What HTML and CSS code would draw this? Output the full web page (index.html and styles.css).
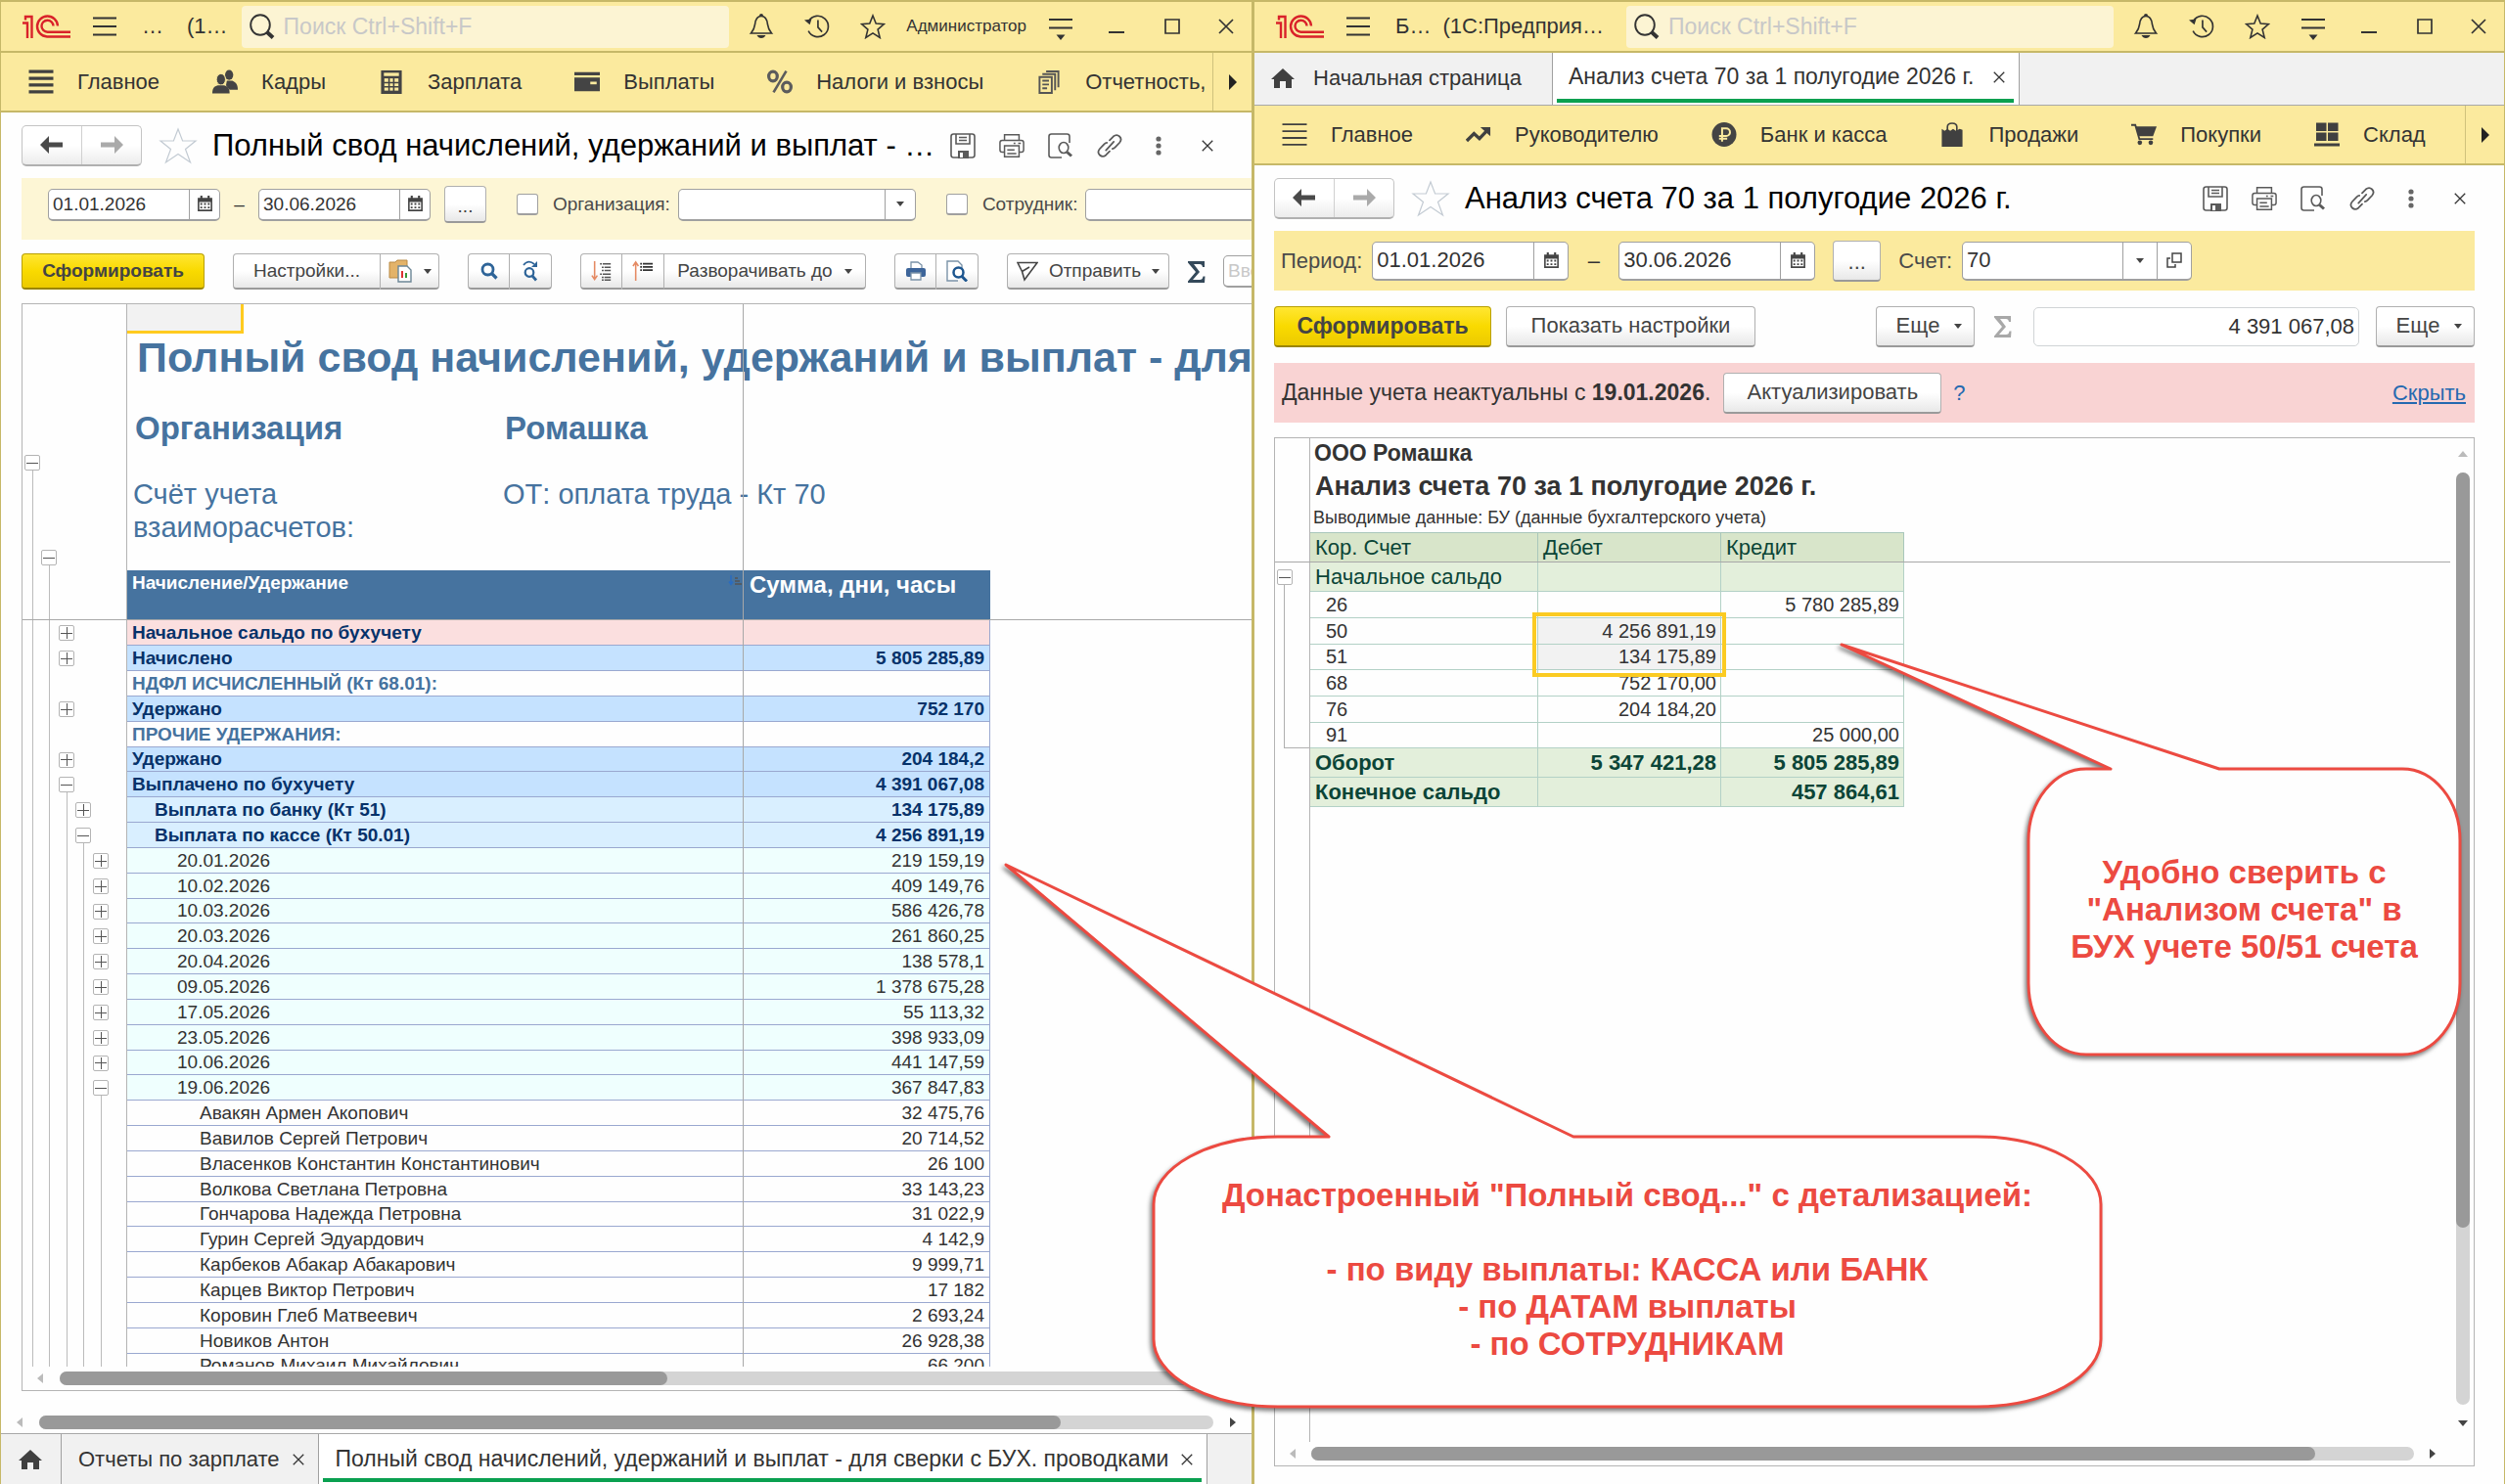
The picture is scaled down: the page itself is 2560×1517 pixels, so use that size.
FILE: index.html
```html
<!DOCTYPE html>
<html lang="ru">
<head>
<meta charset="utf-8">
<meta name="viewport" content="width=device-width, initial-scale=1">
<title>1С:Предприятие</title>
<link rel="stylesheet" href="styles.css">
</head>
<body>
<svg class="defs" aria-hidden="true">
  <symbol id="logo" viewBox="0 0 49 24"><g fill="none" stroke="#d9222a" stroke-width="2.4"><path d="M0 8.5h5V24M3 5.5V2h6.500V24"/><path d="M36 11.500A10.500 10.500 0 1 0 25 22.500H49"/><path d="M31.500 11.500A6 6 0 1 0 25.500 17.700H49"/></g></symbol>
  <symbol id="lines3" viewBox="0 0 24 24"><path d="M0 3.500h24M0 12h24M0 20.500h24" stroke="#333" stroke-width="1.800"/></symbol>
  <symbol id="lines4b" viewBox="0 0 24 24"><path d="M0 2h24M0 8.700h24M0 15.300h24M0 22h24" stroke="#404040" stroke-width="3.200"/></symbol>
  <symbol id="lines4" viewBox="0 0 24 24"><path d="M0 2h24M0 8.700h24M0 15.300h24M0 22h24" stroke="#404040" stroke-width="1.800"/></symbol>
  <symbol id="search" viewBox="0 0 26 26"><g fill="none" stroke="#333"><ellipse cx="11" cy="11.500" rx="9.800" ry="10.300" stroke-width="1.900"/><path d="M17.500 18.500l6.500 6" stroke-width="4"/></g></symbol>
  <symbol id="bell" viewBox="0 0 24 26"><path d="M12 2.500c-4.500 0-6 4-6.500 8.500S4 17 1.500 20h21c-2.500-3-3.500-4.500-4-9S16.500 2.500 12 2.500z" fill="none" stroke="#333" stroke-width="1.700"/><path d="M10 2a2 2 0 0 1 4 0zM7.500 22h9c-1 2-2.500 3-4.500 3s-3.500-1-4.500-3z" fill="#333"/></symbol>
  <symbol id="history" viewBox="0 0 28 26"><path d="M5 7A11.500 11.500 0 1 1 4.500 18M15 6v8l4.500 5" fill="none" stroke="#333" stroke-width="1.800"/><path d="M0 6l8-1-2 6z" fill="#333"/></symbol>
  <symbol id="star" viewBox="0 0 26 26"><path d="M13 2l3.200 8 8.300.6-6.400 5.500 2.100 8.400-7.200-4.600-7.200 4.600 2.100-8.400L1.500 10.600 9.800 10z" fill="none" stroke="#333" stroke-width="1.600"/></symbol>
  <symbol id="bigstar" viewBox="0 0 40 38"><path d="M20 2l4.600 12H38L27.500 22.500 32.500 36 20 27.500 7.500 36l5-13.500L2 14h13.400z" fill="none" stroke="#c3cbd3" stroke-width="1.200"/></symbol>
  <symbol id="menu" viewBox="0 0 24 24"><path d="M0 3h24M0 11.500h24" stroke="#333" stroke-width="1.900"/><path d="M7.500 18.500h9L12 24z" fill="#333"/></symbol>
  <symbol id="min" viewBox="0 0 16 16"><path d="M0 14h16" stroke="#333" stroke-width="2"/></symbol>
  <symbol id="max" viewBox="0 0 16 16"><path d="M1 1h14v14H1z" fill="none" stroke="#333" stroke-width="1.700"/></symbol>
  <symbol id="close" viewBox="0 0 16 16"><path d="M1 1l14 14M15 1L1 15" fill="none" stroke="#333" stroke-width="1.700"/></symbol>
  <symbol id="people" viewBox="0 0 28 26"><g fill="#444"><ellipse cx="18.500" cy="5.500" rx="4.500" ry="5.500"/><path d="M16 12h6c4 2 6 4 6 10h-9l-4-5z"/><ellipse cx="9.500" cy="10.500" rx="5" ry="6.200" stroke="#fbea9e"/><path d="M0 26c0-6 2-8 6-9h7c4 1 6 3 6 9z"/></g></symbol>
  <symbol id="calc" viewBox="0 0 22 26"><path d="M0 1h22v25H0z" fill="#444"/><path d="M3 3.500h16v3.500H3z" fill="#fbea9e"/><path d="M3.500 9.500h15v13h-15z" fill="#fbea9e"/><path d="M8.500 9v14M13.500 9v14M3 14h16M3 18.500h16" stroke="#444" stroke-width="1.600"/></symbol>
  <symbol id="wallet" viewBox="0 0 24 20"><path d="M0 1h24v3H0zM0 6h24v13H0z" fill="#444"/><path d="M15 10h6v2.500h-6z" fill="#fbea9e"/></symbol>
  <symbol id="percent" viewBox="0 0 24 22"><g fill="none" stroke="#5c5c5c" stroke-width="3"><ellipse cx="5.500" cy="6" rx="4" ry="4.500"/><ellipse cx="18.500" cy="16" rx="4" ry="4.500"/><path d="M18 1L6 21" stroke-width="2.400"/></g></symbol>
  <symbol id="docs" viewBox="0 0 22 26"><g fill="none" stroke="#555" stroke-width="2"><path d="M1 8h13v17H1z"/><path d="M4 5h13.500v17M8 2h13v17M4 12h7M4 16h7M4 20h5"/></g></symbol>
  <symbol id="right" viewBox="0 0 10 16"><path d="M1 0l8 8-8 8z" fill="#222"/></symbol>
  <symbol id="back" viewBox="0 0 24 18"><path d="M0 9L9 0v6.500h14v5H9V18z" fill="#4a4a4a"/></symbol>
  <symbol id="fwd" viewBox="0 0 24 18"><path d="M24 9L15 0v6.500H1v5h14V18z" fill="#aaa"/></symbol>
  <symbol id="save" viewBox="0 0 26 26"><g fill="none" stroke="#5a5a5a" stroke-width="1.600"><rect x="1" y="1" width="24" height="24" rx="2.500"/><path d="M6 1v10h14V1M9 4.500h8M9 7.500h8"/></g><path d="M8 18h11v8H8z" fill="#5a5a5a"/><path d="M10 20h3v5h-3z" fill="#fefefe"/></symbol>
  <symbol id="print" viewBox="0 0 28 26"><g fill="none" stroke="#5a5a5a" stroke-width="1.600"><path d="M6 7V1h16v6M6 20H3.500Q1 20 1 17.500V9.500Q1 7 3.500 7h21Q27 7 27 9.500v8q0 2.500-2.500 2.500H22"/><path d="M6 13h16v12H6zM9 17.500h8M9 21.500h10M16 10.200h2M21 10.200h3"/></g></symbol>
  <symbol id="preview" viewBox="0 0 26 26"><g fill="none" stroke="#5a5a5a" stroke-width="1.600"><path d="M22 10V3.500Q22 1 19.500 1h-16Q1 1 1 3.500v19Q1 25 3.500 25H14"/><ellipse cx="16" cy="15" rx="4.800" ry="5.500"/><path d="M19.500 19.500l4.500 4" stroke-width="3"/></g></symbol>
  <symbol id="link" viewBox="0 0 28 26"><g fill="none" stroke="#5a5a5a" stroke-width="1.900" stroke-linecap="round"><path d="M10 18L18.500 8.500M14 7l4-4.200c5-4 11 1.700 7 6.700l-5 5.300c-1 1-2 1.500-3 1.500M14 19l-4 4.200c-5 4-11-1.700-7-6.700l5-5.300c1-1 2-1.500 3-1.500"/></g></symbol>
  <symbol id="dots" viewBox="0 0 6 20"><g fill="#666"><circle cx="3" cy="3" r="2.600"/><circle cx="3" cy="10" r="2.600"/><circle cx="3" cy="17" r="2.600"/></g></symbol>
  <symbol id="cal" viewBox="0 0 14 16"><path d="M0 2h14v13H0z" fill="#444"/><path d="M1.500 6h11v7.500h-11z" fill="#fff"/><path d="M2.500 8h9M2.500 11.500h9" stroke="#444" stroke-width="1.700" stroke-dasharray="1.800 1.800"/><path d="M3.500 0v3M10.500 0v3" stroke="#444" stroke-width="2"/></symbol>
  <symbol id="caret" viewBox="0 0 8 5"><path d="M0 0h8L4 5z" fill="#444"/></symbol>
  <symbol id="open" viewBox="0 0 16 16"><path d="M6 1h9v9H6zM4 6H1v9h8v-3" fill="none" stroke="#444" stroke-width="1.500"/></symbol>
  <symbol id="folder" viewBox="0 0 24 24"><path d="M1 3h6l2-2h10v18H1z" fill="#e3b369" stroke="#b98a44"/><path d="M10 7h9l4 4v12H10z" fill="#fff" stroke="#6c8796" stroke-width="1.400"/><path d="M14 12v7" stroke="#d33" stroke-width="2"/><path d="M18 14v5" stroke="#3a9a3a" stroke-width="2"/></symbol>
  <symbol id="find" viewBox="0 0 18 18"><circle cx="7.500" cy="7.500" r="5.500" fill="none" stroke="#2e6498" stroke-width="2.800"/><path d="M11.500 11.500l5 5" stroke="#2e6498" stroke-width="3.200"/></symbol>
  <symbol id="findnext" viewBox="0 0 18 22"><g fill="none" stroke="#2e6498"><circle cx="8" cy="12.500" r="4.300" stroke-width="2.200"/><path d="M11 16l4 4.500" stroke-width="2.800"/><path d="M2 5q5-6 11-1" stroke-width="1.700"/></g><path d="M16 1v6h-6z" fill="#2e6498"/></symbol>
  <symbol id="expand" viewBox="0 0 24 22"><path d="M4 0v19M1 16l3 4.500L7 16" stroke="#e58a63" stroke-width="1.700" fill="none"/><path d="M10 3h12M12 7h10M12 10.500h10M10 14.500h12M12 18h10M12 21h10" stroke="#555" stroke-width="1.600" stroke-dasharray="2 1 20"/></symbol>
  <symbol id="collapse" viewBox="0 0 24 22"><path d="M4 22V2M1 5.500L4 1l3 4.500" stroke="#e58a63" stroke-width="1.700" fill="none"/><path d="M9 3h14M9 6.500h14M9 10h14" stroke="#333" stroke-width="1.800" stroke-dasharray="2 1 20"/></symbol>
  <symbol id="cprint" viewBox="0 0 22 20"><path d="M6 8V1h7l4 3v4" fill="#fff" stroke="#7b93a8" stroke-width="1.300"/><rect x="1" y="7" width="20" height="9" rx="2" fill="#3d659a"/><path d="M6 12h10v7H6z" fill="#fff" stroke="#7b93a8" stroke-width="1.300"/></symbol>
  <symbol id="cpreview" viewBox="0 0 22 22"><path d="M12 21H1V1h11l4 4v4" fill="#fff" stroke="#7b93a8" stroke-width="1.400"/><circle cx="12.500" cy="12.500" r="5" fill="#fff" stroke="#1d568f" stroke-width="2.500"/><path d="M16 16.500l5 5" stroke="#1d568f" stroke-width="3"/></symbol>
  <symbol id="send" viewBox="0 0 22 19"><path d="M1 1h20L8 18.500 5.500 10zM5.500 10L13 5.500" fill="none" stroke="#444" stroke-width="1.600"/></symbol>
  <symbol id="sum" viewBox="0 0 18 22"><path d="M0 0h17v6h-2q-.5-3-3-3H6l6 8-7 8h7q3 0 3.500-3.500h2L17 22H0v-1.500L8 11 0 1.500z" fill="currentColor"/></symbol>
  <symbol id="home" viewBox="0 0 24 20"><path d="M12 0l12 11h-3v9h-6v-7H9v7H3v-9H0z" fill="#404040"/></symbol>
  <symbol id="trend" viewBox="0 0 28 18"><path d="M1 16l8-8 6 5.500L24 4" fill="none" stroke="#404040" stroke-width="3.600"/><path d="M16 1h11v10z" fill="#404040"/></symbol>
  <symbol id="ruble" viewBox="0 0 24 24"><circle cx="12" cy="12" r="12" fill="#444"/><path d="M10 19V6h4a3.500 3.500 0 0 1 0 7.500H7M7 16h8" fill="none" stroke="#fbea9e" stroke-width="1.900"/></symbol>
  <symbol id="bag" viewBox="0 0 22 26"><path d="M0 7l3 2 3-2 3 2 3-2 3 2 4-2 3 1v18H0z" fill="#404040"/><path d="M6 11V5q0-4 5-4t5 4v6" fill="none" stroke="#404040" stroke-width="1.700"/></symbol>
  <symbol id="cart" viewBox="0 0 28 24"><path d="M0 1.500h4.500L9 17h15" fill="none" stroke="#404040" stroke-width="2"/><path d="M5 3h23l-4 11H8z" fill="#404040"/><circle cx="9.500" cy="21" r="2.500" fill="#404040"/><circle cx="21.500" cy="21" r="2.500" fill="#404040"/></symbol>
  <symbol id="boxes" viewBox="0 0 26 24"><path d="M2 0h10.500v8.500H2zM14 0h10.500v8.500H14zM2 10h10.500v8.500H2zM14 10h10.500v8.500H14zM0 21h26v3H0z" fill="#404040"/></symbol>
  <symbol id="sleft" viewBox="0 0 8 10"><path d="M7 0v10L1 5z" fill="#bbb"/></symbol>
  <symbol id="sright" viewBox="0 0 8 10"><path d="M1 0v10l6-5z" fill="#444"/></symbol>
  <symbol id="sup" viewBox="0 0 10 8"><path d="M0 7h10L5 1z" fill="#bbb"/></symbol>
  <symbol id="sdown" viewBox="0 0 10 8"><path d="M0 1h10L5 7z" fill="#444"/></symbol>
</svg>

<main class="desktop">
<section class="window payroll">
  <header class="titlebar">
    <svg class="logo"><use href="#logo"/></svg>
    <button class="ico" aria-label="Меню"><svg class="i24"><use href="#lines3"/></svg></button>
    <span class="app-name">…</span><span class="app-kind">(1…</span>
    <label class="search"><svg class="i26"><use href="#search"/></svg><input type="search" placeholder="Поиск Ctrl+Shift+F" aria-label="Поиск"></label>
    <div class="sysicons">
      <button class="ico" aria-label="Уведомления"><svg class="i26"><use href="#bell"/></svg></button>
      <button class="ico" aria-label="История"><svg class="i26"><use href="#history"/></svg></button>
      <button class="ico" aria-label="Избранное"><svg class="i26"><use href="#star"/></svg></button>
      <a class="user" href="#user">Администратор</a>
      <button class="ico" aria-label="Сервис"><svg class="i24"><use href="#menu"/></svg></button>
      <button class="ico" aria-label="Свернуть"><svg class="i16"><use href="#min"/></svg></button>
      <button class="ico" aria-label="Развернуть"><svg class="i16"><use href="#max"/></svg></button>
      <button class="ico" aria-label="Закрыть"><svg class="i16"><use href="#close"/></svg></button>
    </div>
  </header>
  <nav class="sections">
    <div class="section-list">
      <a href="#main"><svg><use href="#lines4b"/></svg>Главное</a>
      <a href="#staff"><svg><use href="#people"/></svg>Кадры</a>
      <a href="#salary"><svg><use href="#calc"/></svg>Зарплата</a>
      <a href="#payments"><svg><use href="#wallet"/></svg>Выплаты</a>
      <a href="#taxes"><svg><use href="#percent"/></svg>Налоги и взносы</a>
      <a href="#reports"><svg><use href="#docs"/></svg>Отчетность,</a>
    </div>
    <button class="more-sections" aria-label="Далее"><svg><use href="#right"/></svg></button>
  </nav>
  <div class="form-head">
    <div class="history"><button aria-label="Назад"><svg><use href="#back"/></svg></button><button aria-label="Вперед"><svg><use href="#fwd"/></svg></button></div>
    <button class="ico fav" aria-label="В избранное"><svg><use href="#bigstar"/></svg></button>
    <h1>Полный свод начислений, удержаний и выплат - …</h1>
    <div class="form-icons">
      <button class="ico" aria-label="Сохранить"><svg class="i26"><use href="#save"/></svg></button>
      <button class="ico" aria-label="Печать"><svg class="i26"><use href="#print"/></svg></button>
      <button class="ico" aria-label="Просмотр"><svg class="i26"><use href="#preview"/></svg></button>
      <button class="ico" aria-label="Ссылка"><svg class="i26"><use href="#link"/></svg></button>
      <button class="ico" aria-label="Еще"><svg class="i20"><use href="#dots"/></svg></button>
      <button class="ico" aria-label="Закрыть форму"><svg class="i12"><use href="#close"/></svg></button>
    </div>
  </div>
  <div class="filters">
    <div class="field date"><input type="text" value="01.01.2026" aria-label="Начало периода"><button aria-label="Календарь"><svg class="cal"><use href="#cal"/></svg></button></div>
    <span class="dash">–</span>
    <div class="field date"><input type="text" value="30.06.2026" aria-label="Конец периода"><button aria-label="Календарь"><svg class="cal"><use href="#cal"/></svg></button></div>
    <button class="btn period">...</button>
    <input type="checkbox" id="use-org"><label for="use-org">Организация:</label>
    <div class="field org"><input type="text" aria-label="Организация"><button aria-label="Выбрать"><svg class="caret"><use href="#caret"/></svg></button></div>
    <input type="checkbox" id="use-emp"><label for="use-emp">Сотрудник:</label>
    <div class="field emp"><input type="text" aria-label="Сотрудник"></div>
  </div>
  <div class="toolbar">
    <button class="btn primary">Сформировать</button>
    <div class="group"><button class="btn wide">Настройки...</button><button class="btn opts" aria-label="Варианты"><svg class="i24"><use href="#folder"/></svg><svg class="caret"><use href="#caret"/></svg></button></div>
    <div class="group"><button class="btn sq" aria-label="Найти"><svg class="i18"><use href="#find"/></svg></button><button class="btn sq" aria-label="Найти далее"><svg class="i22"><use href="#findnext"/></svg></button></div>
    <div class="group"><button class="btn sq" aria-label="Развернуть группы"><svg class="i22"><use href="#expand"/></svg></button><button class="btn sq" aria-label="Свернуть группы"><svg class="i22"><use href="#collapse"/></svg></button><button class="btn unfold">Разворачивать до<svg class="caret"><use href="#caret"/></svg></button></div>
    <div class="group"><button class="btn sq" aria-label="Печать"><svg class="i22"><use href="#cprint"/></svg></button><button class="btn sq" aria-label="Предпросмотр"><svg class="i22"><use href="#cpreview"/></svg></button></div>
    <button class="btn send"><svg class="i22"><use href="#send"/></svg>Отправить<svg class="caret"><use href="#caret"/></svg></button>
    <svg class="sum"><use href="#sum"/></svg>
    <div class="field cell-sum"><input type="text" placeholder="Введите слово" aria-label="Сумма"></div>
  </div>

  <div class="sheet">
    <div class="sheet-view">
      <div class="report-head">
        <div class="gutter">
          <div class="lane outer"><button class="box minus" aria-label="Свернуть"></button></div>
          <div class="lane inner"><button class="box minus" aria-label="Свернуть"></button></div>
        </div>
        <div class="report-info">
          <div class="current-cell"></div>
          <h2>Полный свод начислений, удержаний и выплат - для сверки с БУХ. проводками</h2>
          <dl class="params">
            <dt class="strong">Организация</dt><dd class="strong">Ромашка</dd>
            <dt>Счёт учета взаиморасчетов:</dt><dd>ОТ: оплата труда - Кт 70</dd>
          </dl>
        </div>
      </div>
      <table class="ledger">
        <colgroup><col class="c-tree"><col class="c-name"><col class="c-sum"></colgroup>
        <thead><tr><td class="tree l2"></td><th>Начисление/Удержание<svg class="sort" viewBox="0 0 14 10"><path d="M3 0v9M1 6.500l2 3 2-3" fill="none" stroke="#2a6cc0" stroke-width="1.500"/><path d="M7 3h3M7 6h5M7 9h7" stroke="#555" stroke-width="1.500"/></svg></th><th class="h-sum">Сумма, дни, часы</th></tr></thead>
        <tbody>
          <tr class="open-bal"><td class="tree l2"><button class="box plus" aria-label="Развернуть"></button></td><td>Начальное сальдо по бухучету</td><td></td></tr>
          <tr class="total"><td class="tree l2"><button class="box plus" aria-label="Развернуть"></button></td><td>Начислено</td><td>5 805 285,89</td></tr>
          <tr class="caption"><td class="tree l2"></td><td>НДФЛ ИСЧИСЛЕННЫЙ (Кт 68.01):</td><td></td></tr>
          <tr class="total"><td class="tree l2"><button class="box plus" aria-label="Развернуть"></button></td><td>Удержано</td><td>752 170</td></tr>
          <tr class="caption"><td class="tree l2"></td><td>ПРОЧИЕ УДЕРЖАНИЯ:</td><td></td></tr>
          <tr class="total"><td class="tree l2"><button class="box plus" aria-label="Развернуть"></button></td><td>Удержано</td><td>204 184,2</td></tr>
          <tr class="total"><td class="tree l2 start3"><button class="box minus" aria-label="Свернуть"></button></td><td>Выплачено по бухучету</td><td>4 391 067,08</td></tr>
          <tr class="kind"><td class="tree l3"><button class="box plus" aria-label="Развернуть"></button></td><td>Выплата по банку (Кт 51)</td><td>134 175,89</td></tr>
          <tr class="kind"><td class="tree l3 start4"><button class="box minus" aria-label="Свернуть"></button></td><td>Выплата по кассе (Кт 50.01)</td><td>4 256 891,19</td></tr>
          <tr class="day"><td class="tree l4"><button class="box plus" aria-label="Развернуть"></button></td><td>20.01.2026</td><td>219 159,19</td></tr>
          <tr class="day"><td class="tree l4"><button class="box plus" aria-label="Развернуть"></button></td><td>10.02.2026</td><td>409 149,76</td></tr>
          <tr class="day"><td class="tree l4"><button class="box plus" aria-label="Развернуть"></button></td><td>10.03.2026</td><td>586 426,78</td></tr>
          <tr class="day"><td class="tree l4"><button class="box plus" aria-label="Развернуть"></button></td><td>20.03.2026</td><td>261 860,25</td></tr>
          <tr class="day"><td class="tree l4"><button class="box plus" aria-label="Развернуть"></button></td><td>20.04.2026</td><td>138 578,1</td></tr>
          <tr class="day"><td class="tree l4"><button class="box plus" aria-label="Развернуть"></button></td><td>09.05.2026</td><td>1 378 675,28</td></tr>
          <tr class="day"><td class="tree l4"><button class="box plus" aria-label="Развернуть"></button></td><td>17.05.2026</td><td>55 113,32</td></tr>
          <tr class="day"><td class="tree l4"><button class="box plus" aria-label="Развернуть"></button></td><td>23.05.2026</td><td>398 933,09</td></tr>
          <tr class="day"><td class="tree l4"><button class="box plus" aria-label="Развернуть"></button></td><td>10.06.2026</td><td>441 147,59</td></tr>
          <tr class="day"><td class="tree l4 start5"><button class="box minus" aria-label="Свернуть"></button></td><td>19.06.2026</td><td>367 847,83</td></tr>
          <tr class="person"><td class="tree l5"></td><td>Авакян Армен Акопович</td><td>32 475,76</td></tr>
          <tr class="person"><td class="tree l5"></td><td>Вавилов Сергей Петрович</td><td>20 714,52</td></tr>
          <tr class="person"><td class="tree l5"></td><td>Власенков Константин Константинович</td><td>26 100</td></tr>
          <tr class="person"><td class="tree l5"></td><td>Волкова Светлана Петровна</td><td>33 143,23</td></tr>
          <tr class="person"><td class="tree l5"></td><td>Гончарова Надежда Петровна</td><td>31 022,9</td></tr>
          <tr class="person"><td class="tree l5"></td><td>Гурин Сергей Эдуардович</td><td>4 142,9</td></tr>
          <tr class="person"><td class="tree l5"></td><td>Карбеков Абакар Абакарович</td><td>9 999,71</td></tr>
          <tr class="person"><td class="tree l5"></td><td>Карцев Виктор Петрович</td><td>17 182</td></tr>
          <tr class="person"><td class="tree l5"></td><td>Коровин Глеб Матвеевич</td><td>2 693,24</td></tr>
          <tr class="person"><td class="tree l5"></td><td>Новиков Антон</td><td>26 928,38</td></tr>
          <tr class="person"><td class="tree l5"></td><td>Романов Михаил Михайлович</td><td>66 200</td></tr>
        </tbody>
      </table>
      <div class="freeze-col"></div>
      <div class="freeze-row"></div>
    </div>
    <div class="hscroll sheet-scroll"><svg class="arr"><use href="#sleft"/></svg><div class="track"><div class="thumb"></div></div></div>
  </div>
  <div class="hscroll form-scroll"><svg class="arr"><use href="#sleft"/></svg><div class="track"><div class="thumb"></div></div><svg class="arr"><use href="#sright"/></svg></div>
  <nav class="tabs bottom">
    <a class="tab home" href="#home" aria-label="Начальная страница"><svg class="i24"><use href="#home"/></svg></a>
    <a class="tab" href="#salary-reports">Отчеты по зарплате<svg class="i12"><use href="#close"/></svg></a>
    <a class="tab active" href="#summary">Полный свод начислений, удержаний и выплат - для сверки с БУХ. проводками<svg class="i12"><use href="#close"/></svg></a>
  </nav>
</section>

<section class="window books">
  <header class="titlebar">
    <svg class="logo"><use href="#logo"/></svg>
    <button class="ico" aria-label="Меню"><svg class="i24"><use href="#lines3"/></svg></button>
    <span class="app-name">Б…</span><span class="app-kind">(1С:Предприя…</span>
    <label class="search"><svg class="i26"><use href="#search"/></svg><input type="search" placeholder="Поиск Ctrl+Shift+F" aria-label="Поиск"></label>
    <div class="sysicons">
      <button class="ico" aria-label="Уведомления"><svg class="i26"><use href="#bell"/></svg></button>
      <button class="ico" aria-label="История"><svg class="i26"><use href="#history"/></svg></button>
      <button class="ico" aria-label="Избранное"><svg class="i26"><use href="#star"/></svg></button>
      <button class="ico" aria-label="Сервис"><svg class="i24"><use href="#menu"/></svg></button>
      <button class="ico" aria-label="Свернуть"><svg class="i16"><use href="#min"/></svg></button>
      <button class="ico" aria-label="Развернуть"><svg class="i16"><use href="#max"/></svg></button>
      <button class="ico" aria-label="Закрыть"><svg class="i16"><use href="#close"/></svg></button>
    </div>
  </header>
  <nav class="tabs top">
    <a class="tab start" href="#start"><svg class="i24"><use href="#home"/></svg>Начальная страница</a>
    <a class="tab active" href="#analysis">Анализ счета 70 за 1 полугодие 2026 г.<svg class="i12"><use href="#close"/></svg></a>
  </nav>
  <nav class="sections">
    <div class="section-list">
      <a href="#main2"><svg><use href="#lines4"/></svg>Главное</a>
      <a href="#manager"><svg><use href="#trend"/></svg>Руководителю</a>
      <a href="#bank"><svg><use href="#ruble"/></svg>Банк и касса</a>
      <a href="#sales"><svg><use href="#bag"/></svg>Продажи</a>
      <a href="#purchases"><svg><use href="#cart"/></svg>Покупки</a>
      <a href="#stock"><svg><use href="#boxes"/></svg>Склад</a>
    </div>
    <button class="more-sections" aria-label="Далее"><svg><use href="#right"/></svg></button>
  </nav>
  <div class="form-head">
    <div class="history"><button aria-label="Назад"><svg><use href="#back"/></svg></button><button aria-label="Вперед"><svg><use href="#fwd"/></svg></button></div>
    <button class="ico fav" aria-label="В избранное"><svg><use href="#bigstar"/></svg></button>
    <h1>Анализ счета 70 за 1 полугодие 2026 г.</h1>
    <div class="form-icons">
      <button class="ico" aria-label="Сохранить"><svg class="i26"><use href="#save"/></svg></button>
      <button class="ico" aria-label="Печать"><svg class="i26"><use href="#print"/></svg></button>
      <button class="ico" aria-label="Просмотр"><svg class="i26"><use href="#preview"/></svg></button>
      <button class="ico" aria-label="Ссылка"><svg class="i26"><use href="#link"/></svg></button>
      <button class="ico" aria-label="Еще"><svg class="i20"><use href="#dots"/></svg></button>
      <button class="ico" aria-label="Закрыть форму"><svg class="i12"><use href="#close"/></svg></button>
    </div>
  </div>
  <div class="filters">
    <label for="from">Период:</label>
    <div class="field date"><input type="text" id="from" value="01.01.2026"><button aria-label="Календарь"><svg class="cal"><use href="#cal"/></svg></button></div>
    <span class="dash">–</span>
    <div class="field date"><input type="text" value="30.06.2026" aria-label="Конец периода"><button aria-label="Календарь"><svg class="cal"><use href="#cal"/></svg></button></div>
    <button class="btn period">...</button>
    <label for="account">Счет:</label>
    <div class="field account"><input type="text" id="account" value="70"><button aria-label="Выбрать"><svg class="caret"><use href="#caret"/></svg></button><button aria-label="Открыть"><svg class="i16"><use href="#open"/></svg></button></div>
  </div>
  <div class="toolbar">
    <button class="btn primary">Сформировать</button>
    <button class="btn settings">Показать настройки</button>
    <button class="btn more first">Еще<svg class="caret"><use href="#caret"/></svg></button>
    <svg class="sum"><use href="#sum"/></svg>
    <div class="field cell-sum"><input type="text" value="4 391 067,08" aria-label="Сумма"></div>
    <button class="btn more">Еще<svg class="caret"><use href="#caret"/></svg></button>
  </div>
  <div class="notice">
    <span>Данные учета неактуальны с <b>19.01.2026</b>.</span>
    <button class="btn">Актуализировать</button>
    <a href="#help" class="help">?</a>
    <a href="#hide" class="hide">Скрыть</a>
  </div>
  <div class="sheet">
    <div class="sheet-body">
      <div class="sheet-view">
        <div class="gutter"><div class="bracket"><button class="box minus" aria-label="Свернуть"></button></div></div>
        <div class="report">
          <p class="company">ООО Ромашка</p>
          <h2>Анализ счета 70 за 1 полугодие 2026 г.</h2>
          <p class="basis">Выводимые данные: БУ (данные бухгалтерского учета)</p>
          <table class="analysis">
            <colgroup><col class="c-acc"><col class="c-deb"><col class="c-cred"></colgroup>
            <thead><tr><th>Кор. Счет</th><th>Дебет</th><th>Кредит</th></tr></thead>
            <tbody>
              <tr class="opening"><td>Начальное сальдо</td><td></td><td></td></tr>
              <tr><td>26</td><td></td><td>5 780 285,89</td></tr>
              <tr><td>50</td><td class="sel sel-top">4 256 891,19</td><td></td></tr>
              <tr><td>51</td><td class="sel">134 175,89</td><td></td></tr>
              <tr><td>68</td><td>752 170,00</td><td></td></tr>
              <tr><td>76</td><td>204 184,20</td><td></td></tr>
              <tr><td>91</td><td></td><td>25 000,00</td></tr>
              <tr class="sumrow"><td>Оборот</td><td>5 347 421,28</td><td>5 805 285,89</td></tr>
              <tr class="sumrow"><td>Конечное сальдо</td><td></td><td>457 864,61</td></tr>
            </tbody>
          </table>
        </div>
        <div class="freeze-row"></div>
      </div>
      <div class="vscroll"><svg class="arr"><use href="#sup"/></svg><div class="track"><div class="thumb"></div></div><svg class="arr"><use href="#sdown"/></svg></div>
    </div>
    <div class="hscroll sheet-scroll"><svg class="arr"><use href="#sleft"/></svg><div class="track"><div class="thumb"></div></div><svg class="arr"><use href="#sright"/></svg></div>
  </div>
</section>

<aside class="callout summary">
  <svg viewBox="0 0 1120 556"><path d="M278 278A127 69 0 0 0 151 347V485A127 69 0 0 0 278 554H992A127 69 0 0 0 1119 485V347A127 69 0 0 0 992 278H580L0 0 330 278Z"/></svg>
  <div class="text"><p>Донастроенный "Полный свод..." с детализацией:</p><p class="gap">- по виду выплаты: КАССА или БАНК</p><p>- по ДАТАМ выплаты</p><p>- по СОТРУДНИКАМ</p></div>
</aside>
<aside class="callout check">
  <svg viewBox="0 0 632 420"><path d="M250 127A59 73 0 0 0 191 200V346A59 73 0 0 0 250 419H573A59 73 0 0 0 632 346V200A59 73 0 0 0 573 127H386L0 0 275 127Z"/></svg>
  <div class="text"><p>Удобно сверить с</p><p>"Анализом счета" в</p><p>БУХ учете 50/51 счета</p></div>
</aside>
</main>
</body>
</html>
```
FILE: styles.css
```css
:root {
  --yellow: #fbea9e;
  --edge: #c6b868;
  --line: #b4b4b4;
  --ink: #333;
  --blue: #46739f;
  --red: #ec4a41;
}
* { box-sizing: border-box; }
body {
  margin: 0;
  font-family: "Liberation Sans", Arial, sans-serif;
  font-size: 22px;
  color: var(--ink);
  background: #fefefe;
}
h1, h2, p, dl, dd { margin: 0; }
h1 { font-weight: normal; }
a { color: inherit; text-decoration: none; }
button, input { font: inherit; color: inherit; margin: 0; }
button { padding: 0; border: 0; background: none; white-space: nowrap; }
svg { display: block; flex: none; overflow: visible; }
.defs { position: absolute; width: 0; height: 0; overflow: hidden; }
.i12 { width: 12px; height: 12px; }
.i16 { width: 16px; height: 16px; }
.i18 { width: 18px; height: 18px; }
.i20 { width: 20px; height: 20px; }
.i22 { width: 22px; height: 22px; }
.i24 { width: 24px; height: 24px; }
.i26 { width: 26px; height: 26px; }

.desktop {
  position: relative;
  display: grid;
  grid-template-columns: minmax(0, 1fr) minmax(0, 1fr);
  height: 100vh;
  overflow: hidden;
}
.window {
  --pad: 21px;
  display: flex;
  flex-direction: column;
  min-height: 0;
  overflow: hidden;
  border: 2px solid var(--edge);
  border-bottom: 0;
  border-right-width: 1px;
}
.payroll { border-left-width: 1px; }
.books { --pad: 20px; }

/* Title bar */
.titlebar {
  flex: none;
  display: flex;
  align-items: center;
  height: 52px;
  padding-left: 22px;
  background: var(--yellow);
  border-bottom: 2px solid var(--edge);
}
.ico { display: flex; align-items: center; justify-content: center; }
.logo { width: 49px; height: 24px; margin-right: 23px; }
.app-name { margin-left: 26px; }
.app-kind { margin-left: 24px; }
.books .app-kind { margin-left: 12px; }
.search {
  flex: 1;
  display: flex;
  align-items: center;
  gap: 9px;
  height: 43px;
  margin-left: 14px;
  padding-left: 8px;
  background: #fcf4d3;
  border-radius: 4px;
}
.books .search { margin-left: 23px; }
.search input { flex: 1; min-width: 0; border: 0; padding: 0; background: none; font-size: 23px; outline: 0; }
input::placeholder { color: #c8c8c8; opacity: 1; }
.sysicons { flex: none; display: flex; align-items: center; padding-left: 4px; }
.sysicons .ico { width: 57px; }
.sysicons .ico:last-child { width: 53px; }
.sysicons .i24 { margin-top: 4px; }
.user { font-size: 17px; margin: 0 6px; }

/* Section bar */
.sections {
  flex: none;
  display: flex;
  height: 61px;
  background: var(--yellow);
  border-bottom: 2px solid var(--edge);
}
.section-list { flex: 1; min-width: 0; overflow: hidden; display: flex; align-items: center; gap: 54px; padding-left: 28px; }
.section-list a { flex: none; display: flex; align-items: center; gap: 24px; }
.section-list svg { width: 26px; height: 25px; }
.more-sections { width: 40px; border-left: 1px solid #cfc27c; display: flex; align-items: center; justify-content: center; }
.more-sections svg { width: 10px; height: 16px; }

/* Form header */
.form-head { flex: none; display: flex; align-items: center; height: 67px; padding: 0 20px 0 var(--pad); }
.history {
  display: flex;
  width: 123px;
  height: 42px;
  border: 1px solid #c4c4c4;
  border-bottom: 2px solid #b0b0b0;
  border-radius: 5px;
  background: linear-gradient(#fff 50%, #ececec);
}
.history button { flex: 1; display: flex; align-items: center; justify-content: center; }
.history button + button { border-left: 1px solid #d0d0d0; }
.history svg { width: 24px; height: 18px; }
.fav { margin: 0 15px 0 17px; }
.fav svg { width: 40px; height: 38px; }
h1 { flex: 1; min-width: 0; font-size: 31px; color: #000; white-space: nowrap; }
.form-icons { display: flex; align-items: center; }
.form-icons .ico { width: 50px; }

/* Filters and toolbar */
.filters, .toolbar { flex: none; display: flex; align-items: center; margin-left: var(--pad); white-space: nowrap; }
.filters label { color: #4a4a4a; }
.field {
  flex: none;
  display: flex;
  height: 40px;
  background: #fff;
  border: 1px solid #a0a0a0;
  border-bottom-width: 2px;
  border-radius: 5px;
  overflow: hidden;
}
.field input { flex: 1; min-width: 0; border: 0; padding: 0 4px; background: none; outline: 0; }
.field button { width: 35px; border-left: 1px solid #a0a0a0; display: flex; align-items: center; justify-content: center; }
.cal { width: 15px; height: 17px; }
.caret { width: 8px; height: 5px; }
.dash { flex: none; text-align: center; }
.btn {
  flex: none;
  display: flex;
  align-items: center;
  justify-content: center;
  height: 42px;
  color: #444;
  border: 1px solid #b0b0b0;
  border-bottom: 2px solid #9a9a9a;
  border-radius: 4px;
  background: linear-gradient(#fff 50%, #e8e8e8);
}
.btn.primary {
  font-weight: bold;
  border-color: #b89f00 #b89f00 #9a8500;
  background: linear-gradient(#ffe632, #f9da00 50%, #ecca00);
}
.group { flex: none; display: flex; }
.group .btn + .btn { border-left: 0; border-radius: 0 4px 4px 0; }
.group .btn:not(:last-child) { border-radius: 4px 0 0 4px; }
.group .btn + .btn:not(:last-child) { border-radius: 0; }
.sum { width: 18px; height: 22px; }
input[type="checkbox"] {
  flex: none;
  appearance: none;
  width: 22px;
  height: 22px;
  background: #fff;
  border: 1px solid #a0a0a0;
  border-bottom-width: 2px;
  border-radius: 3px;
}

.payroll .filters { height: 63px; padding: 0 0 9px 27px; background: #fdf6d5; font-size: 19px; }
.payroll .field { height: 33px; }
.payroll .date { width: 176px; }
.payroll .date button, .payroll .org button { width: 31px; }
.payroll .dash { width: 39px; }
.payroll .period { width: 43px; height: 38px; margin: 0 31px 0 14px; padding-top: 4px; }
.payroll .filters label { margin: 0 8px 0 15px; }
.payroll .org { width: 243px; margin-right: 31px; }
.payroll .emp { width: 300px; }
.payroll .toolbar { margin-top: 14px; height: 37px; gap: 29px; font-size: 19px; }
.payroll .toolbar .btn { height: 37px; }
.payroll .primary { width: 187px; }
.payroll .wide { width: 151px; }
.payroll .opts { width: 60px; gap: 12px; }
.payroll .sq { width: 43px; }
.payroll .unfold { width: 206px; gap: 12px; }
.payroll .send { width: 166px; gap: 11px; }
.payroll .sum { color: #34495a; margin-left: -10px; }
.payroll .cell-sum { width: 120px; margin-left: -11px; }

.books .filters { height: 61px; margin-right: 30px; padding-left: 7px; background: var(--yellow); }
.books .date { width: 201px; }
.books .filters label { margin-right: 10px; }
.books .dash { width: 51px; }
.books .period { width: 49px; margin: 0 18px; padding-top: 4px; }
.books .account { width: 235px; }
.books .toolbar { margin: 15px 30px 0 var(--pad); height: 43px; }
.books .primary { width: 222px; font-size: 23px; }
.books .settings { width: 255px; margin-left: 15px; }
.more { width: 101px; gap: 15px; padding-left: 8px; }
.more.first { margin-left: auto; }
.books .sum { margin: 0 22px 0 20px; color: #a8a8a8; }
.books .cell-sum { width: 333px; margin-right: 17px; border: 1px solid #d0d4d6; }
.books .cell-sum input { text-align: right; }
.notice {
  flex: none;
  display: flex;
  align-items: center;
  height: 61px;
  margin: 16px 30px 0 var(--pad);
  padding: 0 9px 0 8px;
  background: #f9d3d3;
}
.notice span { font-size: 23px; }
.notice .btn { width: 223px; margin: 0 12px 0 13px; }
.notice a { color: #2569b0; }
.notice .hide { margin-left: auto; text-decoration: underline; }

/* Scrollbars */
.arr { width: 8px; height: 10px; }
.hscroll { flex: none; display: flex; align-items: center; }
.track { flex: 1; min-width: 0; background: #d4d4d4; border-radius: 7px; }
.thumb { background: #999; border-radius: 7px; }
.hscroll .track, .hscroll .thumb { height: 14px; }
.vscroll { flex: none; width: 22px; display: flex; flex-direction: column; align-items: center; padding: 12px 0 15px; gap: 15px; }
.vscroll .arr { width: 10px; height: 8px; }
.vscroll .track, .vscroll .thumb { width: 14px; }
.vscroll .thumb { height: 81%; }

/* Tree boxes */
.box {
  flex: none;
  display: block;
  width: 16px;
  height: 16px;
  border: 1px solid #b4b4b4;
  border-radius: 2px;
  background: linear-gradient(#555, #555) center / 12px 1px no-repeat #fff;
}
.box.plus {
  background: linear-gradient(#555, #555) center / 12px 1px no-repeat, linear-gradient(#555, #555) center / 1px 12px no-repeat #fff;
}

/* Payroll report */
.payroll .sheet {
  flex: 1;
  min-height: 0;
  display: flex;
  flex-direction: column;
  margin: 14px 0 0 var(--pad);
  border: 1px solid var(--line);
  border-right: 0;
}
.sheet-view { position: relative; flex: 1; min-height: 0; overflow: hidden; }
.report-head { display: flex; height: 272px; }
.report-head .gutter { flex: none; display: flex; gap: 1px; width: 107px; padding-left: 2px; border-right: 1px solid var(--line); }
.lane { width: 16px; background: linear-gradient(#bbb, #bbb) 8px 0 / 1px 100% no-repeat; }
.lane.outer { margin-top: 154px; }
.lane.inner { margin-top: 251px; }
.report-info { flex: 1; min-width: 0; color: var(--blue); }
.current-cell { width: 119px; height: 30px; background: #f2f2f2; border: solid #ffcb1f; border-width: 0 3px 3px 0; }
.payroll h2 { margin: 0 0 0 10px; font-size: 43px; line-height: 48px; white-space: nowrap; }
.params { display: grid; grid-template-columns: 378px 1fr; margin: 32px 0 0 6px; font-size: 29px; line-height: 34px; }
.params dt { max-width: 300px; }
.params .strong { font-size: 33px; font-weight: bold; margin-bottom: 33px; padding-left: 2px; }
.ledger { width: 989px; table-layout: fixed; border-collapse: separate; border-spacing: 0; font-size: 19px; }
.c-tree { width: 107px; }
.c-name { width: 630px; }
.ledger th { position: relative; height: 51px; padding: 2px 5px; background: var(--blue); color: #fff; font-weight: bold; text-align: left; vertical-align: top; line-height: 22px; }
.ledger .h-sum { font-size: 24px; padding: 4px 6px; }
.sort { position: absolute; right: 2px; top: 5px; width: 14px; height: 10px; }
.ledger td { padding: 0 5px; line-height: 25px; border-bottom: 1px solid #9aa8d0; white-space: nowrap; }
.ledger tr:nth-child(6n) td { line-height: 24px; }
.ledger td:last-child { text-align: right; border-right: 1px solid #9aa8d0; padding-right: 5px; }
.ledger .tree { padding: 0; border-bottom: 0; border-right: 1px solid var(--line); }
.open-bal, .total, .kind { font-weight: bold; color: #06326a; }
.open-bal td:not(.tree) { background: #fbdfdf; }
.total td:not(.tree) { background: #c5e2ff; }
.kind td:not(.tree) { background: #d9efff; }
.day td:not(.tree) { background: #effffe; }
.caption { font-weight: bold; color: var(--blue); }
.kind td:nth-child(2) { padding-left: 28px; }
.day td:nth-child(2) { padding-left: 51px; }
.person td:nth-child(2) { padding-left: 74px; }
.tree {
  --bar: linear-gradient(#bbb, #bbb);
  background-image: var(--bar), var(--bar), var(--bar), var(--bar), var(--bar);
  background-repeat: no-repeat;
  background-position: 10px 0, 27px 0, 45px 100%, 62px 100%, 80px 100%;
}
.l2 { background-size: 1px 100%, 1px 100%, 0 0, 0 0, 0 0; }
.l2.start3 { background-size: 1px 100%, 1px 100%, 1px 50%, 0 0, 0 0; }
.l3 { background-size: 1px 100%, 1px 100%, 1px 100%, 0 0, 0 0; }
.l3.start4 { background-size: 1px 100%, 1px 100%, 1px 100%, 1px 50%, 0 0; }
.l4 { background-size: 1px 100%, 1px 100%, 1px 100%, 1px 100%, 0 0; }
.l4.start5 { background-size: 1px 100%, 1px 100%, 1px 100%, 1px 100%, 1px 50%; }
.l5 { background-size: 1px 100%; }
.l2 .box { margin-left: 37px; }
.l3 .box { margin-left: 54px; }
.l4 .box { margin-left: 72px; }
.freeze-col { position: absolute; left: 736px; top: 0; bottom: 0; border-left: 1px solid #a8a8a8; }
.payroll .freeze-row { position: absolute; top: 322px; left: 0; right: 0; border-top: 1px solid #a8a8a8; }
.payroll .sheet-scroll { height: 24px; padding-left: 14px; gap: 16px; }
.payroll .sheet-scroll .thumb { width: 51%; }
.form-scroll { height: 43px; padding: 20px 15px 0 15px; gap: 16px; }
.form-scroll .thumb { width: 87%; }

/* Tabs */
.tabs { flex: none; display: flex; background: #f1f1f1; border-bottom: 1px solid #a8a8a8; }
.tab { display: flex; align-items: center; border-right: 1px solid #a0a0a0; white-space: nowrap; }
.tab.active { background: #fff; position: relative; font-size: 23px; }
.tab.active::after { content: ""; position: absolute; left: 4px; right: 5px; bottom: 2px; height: 4px; background: #0aa050; }
.tabs.top { height: 54px; }
.start { width: 305px; padding-left: 17px; gap: 19px; padding-bottom: 2px; }
.start svg { height: 20px; }
.tabs.top .active { padding: 0 14px 4px 16px; gap: 20px; }
.tabs.bottom { height: 52px; border-top: 1px solid #a8a8a8; border-bottom: 0; }
.tabs.bottom .tab { padding: 0 14px 0 17px; gap: 13px; }
.tabs.bottom .home { width: 62px; padding: 0 0 0 18px; }

/* Account analysis */
.books .sheet {
  flex: 1;
  min-height: 0;
  display: flex;
  flex-direction: column;
  margin: 15px 30px 18px var(--pad);
  border: 1px solid var(--line);
}
.sheet-body { flex: 1; min-height: 0; display: flex; }
.books .sheet-view { display: flex; }
.books .gutter { flex: none; width: 36px; padding: 134px 0 0 2px; border-right: 1px solid var(--line); }
.bracket { height: 183px; background: linear-gradient(#b0b0b0, #b0b0b0) 7px 0 / 1px 100% no-repeat, linear-gradient(#b0b0b0, #b0b0b0) 7px 100% / 100% 1px no-repeat; }
.report { flex: 1; min-width: 0; }
.company { padding: 2px 0 0 4px; font-size: 23px; line-height: 26px; font-weight: bold; }
.books h2 { padding-left: 5px; margin-top: 5px; font-size: 27px; line-height: 32px; }
.basis { padding-left: 3px; margin: 6px 0 5px; font-size: 18px; line-height: 20px; }
.analysis { width: 607px; table-layout: fixed; border-collapse: separate; border-spacing: 0; }
.c-acc { width: 233px; }
.c-deb { width: 187px; }
.analysis th { height: 31px; padding: 0 5px; text-align: left; font-weight: normal; line-height: 29px; color: #0b4537; background: #d8e5ca; border: solid #a9c7bb; border-width: 1px 1px 1px 0; }
.analysis td { padding: 0 5px; font-size: 20px; line-height: 26px; border: solid #b3d1c6; border-width: 0 1px 1px 0; }
.analysis tr:nth-child(3n + 1) td { line-height: 25px; }
.analysis td:first-child { padding-left: 16px; }
.analysis td:not(:first-child) { text-align: right; padding-right: 4px; }
.analysis tr.opening td, .analysis tr.sumrow td { height: 30px; line-height: 29px; font-size: 22px; color: #0b4537; background: #e3efdb; }
.analysis .opening td:first-child, .analysis .sumrow td:first-child { padding-left: 5px; }
.analysis .sumrow td { font-weight: bold; }
.analysis .sel { position: relative; background: #f2f2f2; }
.sel-top::after { content: ""; position: absolute; z-index: 1; left: -6px; right: -6px; top: -6px; height: 58px; border: 4px solid #fbcb22; }
.books .freeze-row { position: absolute; top: 126px; left: 0; right: 2px; border-top: 1px solid #a8a8a8; }
.books .sheet-scroll { height: 24px; padding: 0 38px 0 14px; gap: 15px; }
.books .sheet-scroll .thumb { width: 91%; }

/* Annotation balloons */
.callout { position: absolute; color: var(--red); font-size: 33px; font-weight: bold; line-height: 38px; text-align: center; }
.callout svg { width: 100%; height: 100%; filter: drop-shadow(-2px 3px 2px rgba(0, 0, 0, 0.5)); }
.callout path { fill: #fefefe; stroke: var(--red); stroke-width: 3; stroke-linejoin: round; }
.callout .text { position: absolute; display: flex; flex-direction: column; justify-content: center; white-space: nowrap; }
.callout .gap { margin-top: 38px; }
.callout.summary { left: 1028px; top: 884px; width: 1120px; height: 556px; }
.summary .text { left: 151px; right: 1px; top: 276px; height: 276px; }
.callout.check { left: 1882px; top: 659px; width: 632px; height: 420px; }
.check .text { left: 191px; right: 0; top: 125px; height: 292px; }
```
